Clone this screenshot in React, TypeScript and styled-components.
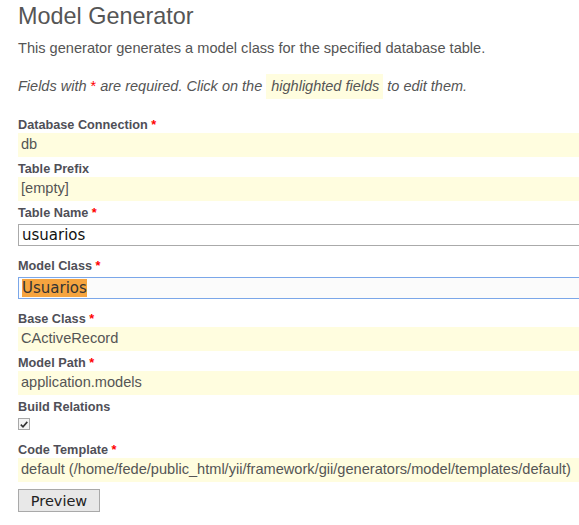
import React from 'react';
import styled, { createGlobalStyle } from 'styled-components';

const GlobalStyle = createGlobalStyle`
    html, body {
        margin: 0;
        padding: 0;
        background: #fff;
    }
    body {
        font-family: 'Liberation Sans', Arial, sans-serif;
        color: #555;
    }
`;

const Page = styled.div`
    padding-left: 18px;
    overflow: hidden;
`;

const Title = styled.h1`
    margin: 2px 0 0;
    font-size: 23.4px;
    line-height: 28px;
    font-weight: normal;
    color: #555;
`;

const Intro = styled.p`
    margin: 9px 0 0;
    font-size: 14.6px;
    line-height: 18px;
`;

const Hint = styled(Intro)`
    margin-top: 20px;
    font-size: 14.5px;
    font-style: italic;
`;

const Sticky = styled.span`
    background: #fffddf;
    padding: 4px 4px 5px 5px;
`;

const Required = styled.span`
    color: #f00;
    font-style: normal;
`;

const Form = styled.div`
    margin-top: 18px;
`;

const Row = styled.div`
    padding-top: 4px;
`;

const Label = styled.label`
    display: block;
    font-size: 12.7px;
    line-height: 16px;
    font-weight: bold;
    color: #4f4f57;
`;

const StickyValue = styled.div`
    width: calc(100% + 20px);
    height: 24px;
    box-sizing: border-box;
    padding: 0 0 2px 3px;
    background: #fffddf;
    font-size: 14.6px;
    line-height: 22px;
    color: #555;
    white-space: nowrap;
`;

const TextInput = styled.input`
    display: block;
    width: calc(100% + 20px);
    height: 22px;
    box-sizing: border-box;
    margin: 3px 0 8px;
    padding: 0 3px;
    border: 1px solid #aaa;
    background: #fff;
    font-family: 'DejaVu Sans', Verdana, sans-serif;
    font-size: 15px;
    color: #111;
    outline: none;
`;

const FocusedInput = styled.div`
    width: calc(100% + 20px);
    height: 22px;
    box-sizing: border-box;
    margin: 3px 0 8px;
    padding: 1px 3px 0;
    border: 1px solid #7ba7e9;
    background: #fbfbfb;
    font-family: 'DejaVu Sans', Verdana, sans-serif;
    font-size: 15px;
    line-height: 18px;
    color: #333;
`;

const Selection = styled.span`
    display: inline-block;
    background: #f6a43f;
    height: 18px;
`;

const CheckWrap = styled.div`
    height: 20px;
`;

const CheckBox = styled.span`
    display: flex;
    align-items: center;
    justify-content: center;
    margin-top: 3px;
    width: 12px;
    height: 12px;
    box-sizing: border-box;
    border: 1px solid #a8a8a8;
    background: #f4f4f4;
`;

const Button = styled.button`
    display: block;
    margin-top: 7px;
    width: 82px;
    height: 23px;
    padding: 0;
    border: 1px solid #a9a9a9;
    background: #e8e8e8;
    font-family: 'DejaVu Sans', Verdana, sans-serif;
    font-size: 14.5px;
    color: #222;
    cursor: pointer;
`;

const fields = [
    { label: 'Database Connection', required: true, value: 'db' },
    { label: 'Table Prefix', required: false, value: '[empty]' },
];

const lower = [
    { label: 'Base Class', required: true, value: 'CActiveRecord' },
    { label: 'Model Path', required: true, value: 'application.models' },
];

const App = () => {
    return (
        <Page>
            <GlobalStyle />
            <Title>Model Generator</Title>
            <Intro>This generator generates a model class for the specified database table.</Intro>
            <Hint>
                Fields with <Required>*</Required> are required. Click on the <Sticky>highlighted fields</Sticky> to edit
                them.
            </Hint>
            <Form>
                {fields.map(f => (
                    <Row key={f.label}>
                        <Label>
                            {f.label} {f.required && <Required>*</Required>}
                        </Label>
                        <StickyValue>{f.value}</StickyValue>
                    </Row>
                ))}
                <Row>
                    <Label>
                        Table Name <Required>*</Required>
                    </Label>
                    <TextInput defaultValue="usuarios" />
                </Row>
                <Row>
                    <Label>
                        Model Class <Required>*</Required>
                    </Label>
                    <FocusedInput>
                        <Selection>Usuarios</Selection>
                    </FocusedInput>
                </Row>
                {lower.map(f => (
                    <Row key={f.label}>
                        <Label>
                            {f.label} {f.required && <Required>*</Required>}
                        </Label>
                        <StickyValue>{f.value}</StickyValue>
                    </Row>
                ))}
                <Row>
                    <Label>Build Relations</Label>
                    <CheckWrap>
                        <CheckBox>
                            <svg width="8" height="7" viewBox="0 0 8 7">
                                <path d="M0.8 3.6 L3 5.8 L7.3 0.9" fill="none" stroke="#333" strokeWidth="1.6" />
                            </svg>
                        </CheckBox>
                    </CheckWrap>
                </Row>
                <Row>
                    <Label>
                        Code Template <Required>*</Required>
                    </Label>
                    <StickyValue>
                        default (/home/fede/public_html/yii/framework/gii/generators/model/templates/default)
                    </StickyValue>
                </Row>
                <Button>Preview</Button>
            </Form>
        </Page>
    );
};

export default App;
